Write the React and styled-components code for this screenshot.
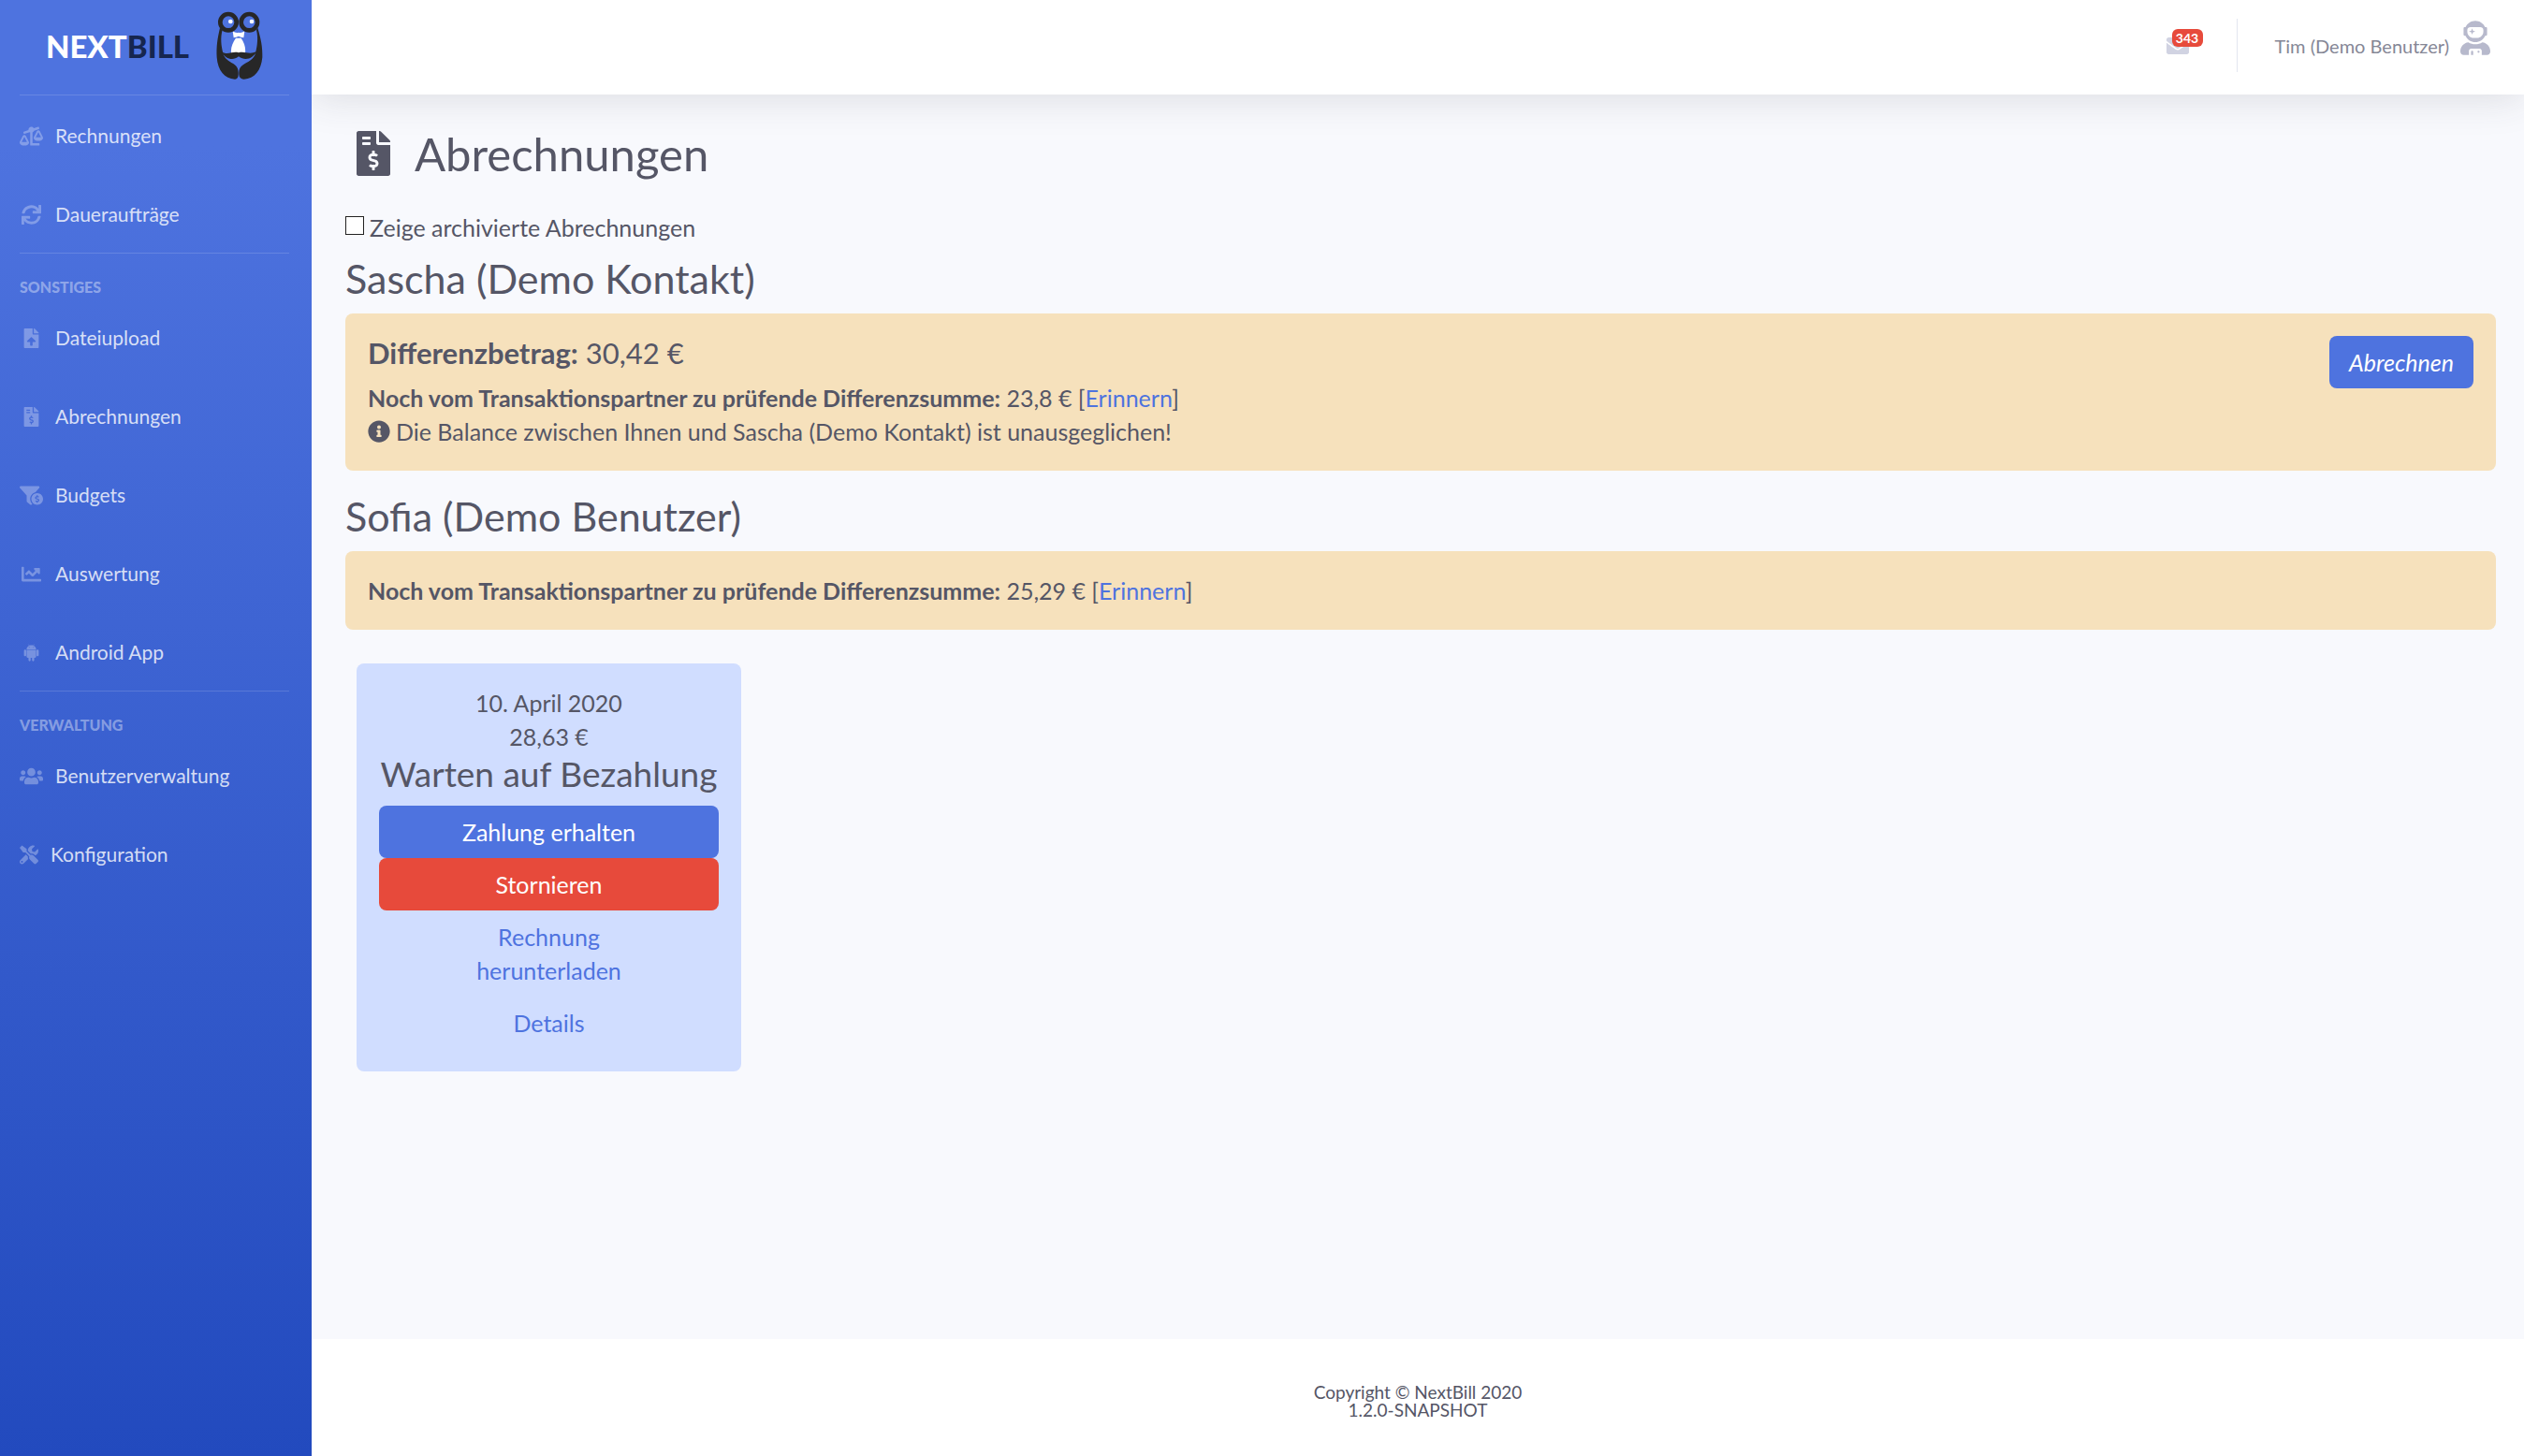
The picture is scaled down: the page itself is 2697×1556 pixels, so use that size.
import React from "react";
import styled, { createGlobalStyle } from "styled-components";
import {
  FaBalanceScaleLeft,
  FaSync,
  FaFileUpload,
  FaFileInvoiceDollar,
  FaFunnelDollar,
  FaChartLine,
  FaUsers,
  FaTools,
  FaEnvelope,
  FaUserAstronaut,
  FaInfoCircle,
} from "react-icons/fa";

const color = {
  primary: "#4e73df",
  primaryDark: "#224abe",
  danger: "#e74a3b",
  text: "#555666",
  muted: "#858796",
  page: "#f8f9fd",
  warning: "#f6e1bc",
  info: "#d0ddff",
};

const GlobalStyle = createGlobalStyle`
  *, *::before, *::after { box-sizing: border-box; }
  body {
    margin: 0;
    font-family: Lato, "Open Sans", sans-serif;
    font-size: 25px;
    line-height: 36px;
    color: ${color.text};
    background: ${color.page};
  }
  button, input { font: inherit; }
  h1, h2, h3, p, ul { margin: 0; padding: 0; font-weight: 400; }
  a { color: ${color.primary}; text-decoration: none; }
`;

const Shell = styled.div`
  display: flex;
  min-height: 100vh;
`;

const Sidebar = styled.nav`
  flex: 0 0 333px;
  padding: 0 24px 0 21px;
  background: linear-gradient(180deg, ${color.primary} 10%, ${color.primaryDark} 100%);
`;

const Brand = styled.a`
  display: flex;
  align-items: center;
  justify-content: center;
  gap: 29px;
  height: 101px;
  padding-bottom: 4px;
  font-size: 33px;
  font-weight: 900;
  color: #fff;
`;

const BrandDark = styled.span`
  color: #162650;
`;

const Divider = styled.hr`
  height: 1px;
  margin: 0;
  border: 0;
  background: rgba(255, 255, 255, 0.15);
`;

const NavHeading = styled.h2`
  padding: 24px 0 0;
  height: 47px;
  font-size: 16px;
  font-weight: 900;
  line-height: 23px;
  text-transform: uppercase;
  color: rgba(255, 255, 255, 0.4);
`;

const NavList = styled.ul`
  list-style: none;
`;

const NavLink = styled.a`
  display: flex;
  align-items: center;
  gap: 13px;
  height: 84px;
  padding-top: 2px;
  font-size: 21px;
  color: rgba(255, 255, 255, 0.8);
`;

const NavIcon = styled.span`
  display: flex;
  color: rgba(255, 255, 255, 0.3);

  svg {
    display: block;
    width: ${({ $narrow }) => ($narrow ? "20px" : "25px")};
    height: 21px;
  }
`;

const Content = styled.div`
  flex: 1;
  min-width: 0;
  display: flex;
  flex-direction: column;
  overflow: hidden;
`;

const Topbar = styled.header`
  display: flex;
  align-items: center;
  justify-content: flex-end;
  height: 101px;
  padding: 0 36px 4px;
  background: #fff;
  box-shadow: 0 4px 42px 0 rgba(58, 59, 69, 0.15);
`;

const Messages = styled.a`
  position: relative;
  display: flex;
  margin-right: 51px;
  font-size: 24px;
  color: #d1d3e2;
`;

const Badge = styled.span`
  position: absolute;
  top: -6px;
  left: 6px;
  width: 33px;
  border-radius: 6px;
  background: ${color.danger};
  color: #fff;
  font-size: 14px;
  font-weight: 700;
  line-height: 19px;
  text-align: center;
`;

const Account = styled.a`
  display: flex;
  align-items: center;
  gap: 12px;
  height: 57px;
  padding-left: 40px;
  border-left: 1px solid #e3e6f0;
  font-size: 20px;
  color: ${color.muted};

  svg {
    width: 32px;
    height: 37px;
    margin-bottom: 16px;
    color: #b7b9cc;
  }
`;

const Main = styled.main`
  flex: 1;
  padding: 34px 30px 36px 36px;
`;

const PageTitle = styled.h1`
  display: flex;
  align-items: center;
  gap: 26px;
  padding-left: 12px;
  margin-bottom: 32px;
  font-size: 49px;
  line-height: 58px;

  svg {
    width: 36px;
    height: 48px;
  }
`;

const CheckLabel = styled.label`
  display: flex;
  align-items: center;
  gap: 6px;
  width: fit-content;
  margin-bottom: 12px;
`;

const Checkbox = styled.input`
  appearance: none;
  width: 20px;
  height: 20px;
  margin: 0 0 4px;
  border: 1px solid #222;
  background: #fff;

  &:checked {
    background: ${color.primary};
  }
`;

const PartnerTitle = styled.h2`
  margin-bottom: 12px;
  font-size: 43px;
  line-height: 50px;
`;

const Alert = styled.section`
  display: flex;
  align-items: flex-start;
  justify-content: space-between;
  gap: 24px;
  padding: 24px;
  margin-bottom: 24px;
  border-radius: 8px;
  background: ${color.warning};
`;

const Amount = styled.p`
  margin-bottom: 12px;
  font-size: 31px;
`;

const IconLine = styled.p`
  display: flex;
  align-items: center;
  gap: 6px;

  svg {
    width: 24px;
    height: 24px;
  }
`;

const Button = styled.button`
  display: block;
  width: ${({ $block }) => ($block ? "100%" : "auto")};
  padding: 10px 21px;
  border: 0;
  border-radius: 8px;
  background: ${({ $danger }) => ($danger ? color.danger : color.primary)};
  color: #fff;
  font-style: ${({ $italic }) => ($italic ? "italic" : "normal")};
  line-height: 36px;
  text-align: center;
  cursor: pointer;
`;

const Card = styled.article`
  width: 411px;
  margin: 36px 12px;
  padding: 24px;
  border-radius: 8px;
  background: ${color.info};
  text-align: center;
`;

const CardTitle = styled.h3`
  margin-bottom: 12px;
  font-size: 37px;
  line-height: 44px;
  white-space: nowrap;
`;

const CardLink = styled.a`
  display: block;
  padding: 10px 72px;
`;

const Footer = styled.footer`
  padding: 47px 36px 40px;
  background: #fff;
  font-size: 19px;
  line-height: 19px;
  text-align: center;
`;

function AndroidIcon() {
  return (
    <svg viewBox="0 0 448 512" fill="currentColor" aria-hidden="true">
      <path d="M89.6 204.5v115.8c0 15.4-12.1 27.7-27.5 27.7-15.3 0-30.1-12.4-30.1-27.7V204.5c0-15.1 14.8-27.5 30.1-27.5 15.1 0 27.5 12.4 27.5 27.5zm10.8 157c0 16.4 13.2 29.6 29.6 29.6h19.9l.3 61.1c0 36.9 55.2 36.6 55.2 0v-61.1h37.2v61.1c0 36.7 55.5 36.8 55.5 0v-61.1h20.2c16.2 0 29.4-13.2 29.4-29.6V182.1H100.4v179.4zm248-189.1H99.3c0-42.8 25.6-80 63.6-99.4l-19.1-35.3c-2.8-4.9 4.3-8 6.7-3.8l19.4 35.6c34.9-15.5 75-14.7 108.3 0L297.5 34c2.5-4.3 9.5-1.1 6.7 3.8L285.1 73c37.7 19.4 63.3 56.6 63.3 99.4zm-170.7-55.5c0-5.7-4.6-10.5-10.5-10.5-5.7 0-10.2 4.8-10.2 10.5s4.6 10.5 10.2 10.5c5.9 0 10.5-4.8 10.5-10.5zm113.4 0c0-5.7-4.6-10.5-10.2-10.5-5.9 0-10.5 4.8-10.5 10.5s4.6 10.5 10.5 10.5c5.6 0 10.2-4.8 10.2-10.5zm94.8 60.1c-15.1 0-27.5 12.1-27.5 27.5v115.8c0 15.4 12.4 27.7 27.5 27.7 15.4 0 30.1-12.4 30.1-27.7V204.5c0-15.4-14.8-27.5-30.1-27.5z" />
    </svg>
  );
}

function Logo() {
  return (
    <svg width="50" height="74" viewBox="695 37 150 222" aria-hidden="true">
      <g fill="#272727">
        <path d="M707 90C699 125 695 150 697 185C700 228 722 253 755 255C765 254 767 246 766 232C765 216 758 210 745 203C728 193 719 182 717 171C711 148 708 122 715 97Z" />
        <path d="M828 90C838 125 844 150 843 185C839 228 818 253 784 255C771 254 767 246 768 232C769 216 778 210 792 202C809 193 819 182 821 171C827 148 830 122 824 97Z" />
      </g>
      <path fill="#fff" d="M748 101Q758 108 767 105Q776 108 786 101L783 122Q774 120 767 117Q759 120 751 122Z" />
      <path fill="#fff" d="M758 123L775 123C785 138 790 152 788 172L743 172C741 152 748 138 758 123Z" />
      <path fill="#272727" d="M714 168C735 178 748 164 767 170C787 164 802 178 824 166C815 187 789 199 767 182C747 199 722 187 714 168Z" />
      <g fill="none" stroke="#272727" strokeWidth="14">
        <circle cx="734" cy="72" r="26" />
        <circle cx="801" cy="72" r="26" />
      </g>
      <circle cx="741" cy="70" r="7" fill="#fff" />
      <circle cx="809" cy="70" r="7" fill="#fff" />
    </svg>
  );
}

const groups = [
  {
    items: [
      { label: "Rechnungen", Icon: FaBalanceScaleLeft },
      { label: "Daueraufträge", Icon: FaSync },
    ],
  },
  {
    title: "Sonstiges",
    items: [
      { label: "Dateiupload", Icon: FaFileUpload },
      { label: "Abrechnungen", Icon: FaFileInvoiceDollar },
      { label: "Budgets", Icon: FaFunnelDollar },
      { label: "Auswertung", Icon: FaChartLine },
      { label: "Android App", Icon: AndroidIcon },
    ],
  },
  {
    title: "Verwaltung",
    items: [
      { label: "Benutzerverwaltung", Icon: FaUsers },
      { label: "Konfiguration", Icon: FaTools, narrow: true },
    ],
  },
];

function Navigation() {
  return (
    <Sidebar>
      <Brand href="#">
        <span>
          NEXT<BrandDark>BILL</BrandDark>
        </span>
        <Logo />
      </Brand>
      {groups.map((group) => (
        <React.Fragment key={group.title || "main"}>
          <Divider />
          {group.title && <NavHeading>{group.title}</NavHeading>}
          <NavList>
            {group.items.map(({ label, Icon, narrow }) => (
              <li key={label}>
                <NavLink href="#">
                  <NavIcon $narrow={narrow}>
                    <Icon />
                  </NavIcon>
                  {label}
                </NavLink>
              </li>
            ))}
          </NavList>
        </React.Fragment>
      ))}
    </Sidebar>
  );
}

function PendingSum({ amount }) {
  return (
    <p>
      <strong>Noch vom Transaktionspartner zu prüfende Differenzsumme:</strong> {amount} [
      <a href="#">Erinnern</a>]
    </p>
  );
}

export default function App() {
  return (
    <>
      <GlobalStyle />
      <Shell>
        <Navigation />
        <Content>
          <Topbar>
            <Messages href="#" aria-label="Nachrichten">
              <FaEnvelope />
              <Badge>343</Badge>
            </Messages>
            <Account href="#">
              Tim (Demo Benutzer)
              <FaUserAstronaut />
            </Account>
          </Topbar>
          <Main>
            <PageTitle>
              <FaFileInvoiceDollar />
              Abrechnungen
            </PageTitle>
            <CheckLabel htmlFor="archived">
              <Checkbox id="archived" type="checkbox" />
              Zeige archivierte Abrechnungen
            </CheckLabel>

            <PartnerTitle>Sascha (Demo Kontakt)</PartnerTitle>
            <Alert>
              <div>
                <Amount>
                  <strong>Differenzbetrag:</strong> 30,42 €
                </Amount>
                <PendingSum amount="23,8 €" />
                <IconLine>
                  <FaInfoCircle />
                  Die Balance zwischen Ihnen und Sascha (Demo Kontakt) ist unausgeglichen!
                </IconLine>
              </div>
              <Button type="button" $italic>
                Abrechnen
              </Button>
            </Alert>

            <PartnerTitle>Sofia (Demo Benutzer)</PartnerTitle>
            <Alert>
              <PendingSum amount="25,29 €" />
            </Alert>

            <Card>
              <p>10. April 2020</p>
              <p>28,63 €</p>
              <CardTitle>Warten auf Bezahlung</CardTitle>
              <Button type="button" $block>
                Zahlung erhalten
              </Button>
              <Button type="button" $block $danger>
                Stornieren
              </Button>
              <CardLink href="#">Rechnung herunterladen</CardLink>
              <CardLink href="#">Details</CardLink>
            </Card>
          </Main>
          <Footer>
            <p>Copyright © NextBill 2020</p>
            <p>1.2.0-SNAPSHOT</p>
          </Footer>
        </Content>
      </Shell>
    </>
  );
}
